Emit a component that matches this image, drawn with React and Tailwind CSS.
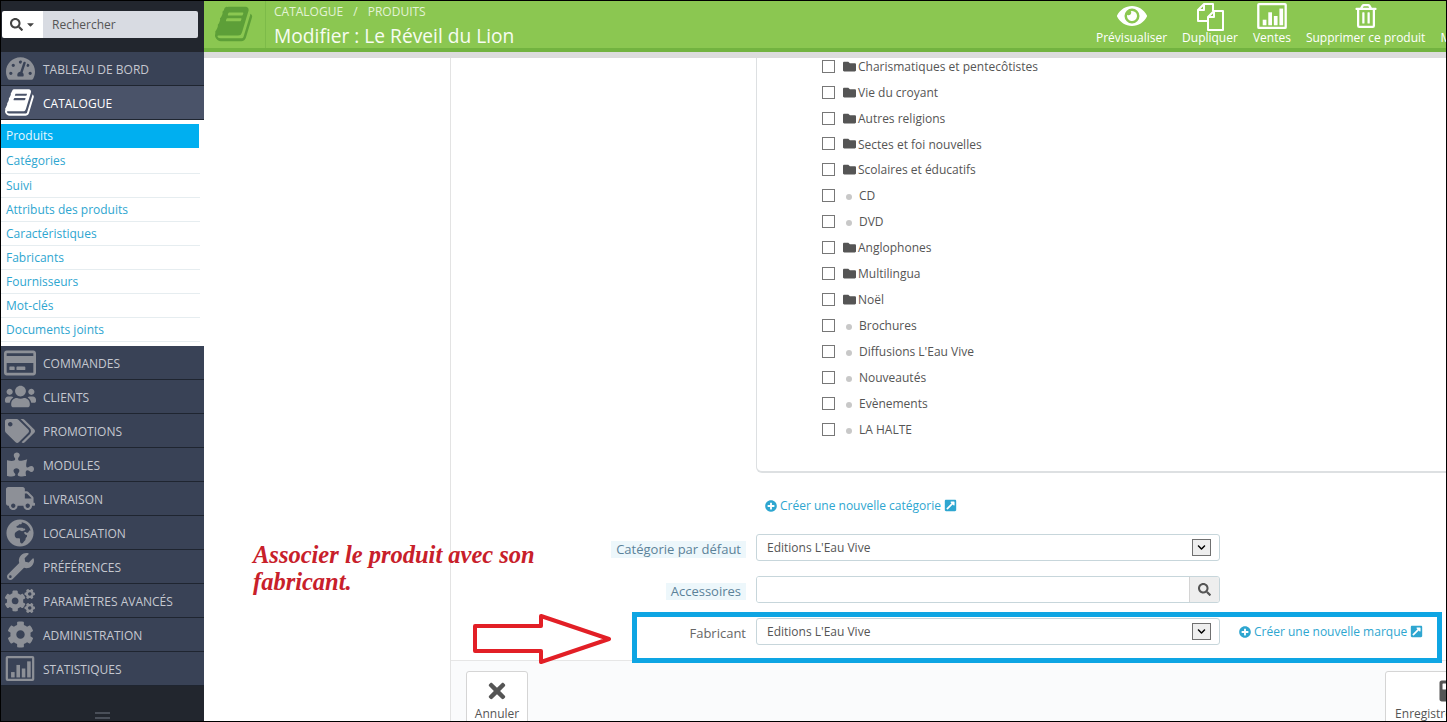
import React from 'react';
import {
  FaCaretDown, FaCog, FaCogs, FaExternalLinkSquareAlt, FaEye, FaFolder, FaGlobeAfrica,
  FaPlusCircle, FaPuzzlePiece, FaRegCreditCard, FaRegTrashAlt, FaSave, FaSearch,
  FaTachometerAlt, FaTags, FaTimes, FaTruck, FaUsers, FaWrench, FaChevronDown,
} from 'react-icons/fa';

function BookIcon({ className }) {
  return (
    <svg viewBox="0 0 1792 1792" className={className} fill="currentColor">
      <path d="M1639 478q40 57 18 129l-275 906q-19 64-76.5 107.5t-122.5 43.5h-923q-77 0-148.5-53.5t-99.5-131.5q-24-67-2-127 0-4 3-27t4-37q1-8-3-21.5t-3-19.5q2-11 8-21t16.5-23.5 16.5-23.5q23-38 45-91.5t30-91.5q3-10 .5-30t-.5-28q3-11 17-28t17-23q21-36 42-92t25-90q1-9-2.5-32t.5-28q4-13 22-30.5t22-22.5q19-26 42.5-84.5t27.5-96.5q1-8-3-25.5t-2-26.5q2-8 9-18t18-23 17-21q8-12 16.5-30.5t15-35 16-36 19.5-32 26.5-23.5 36-11.5 47.5 5.5l-1 3q38-9 51-9h761q74 0 114 56t18 130l-274 906q-36 119-71.5 153.5t-128.5 34.5h-869q-27 0-38 15-11 16-1 43 24 70 144 70h923q29 0 56-15.5t35-41.5l300-987q7-22 5-57 38 15 59 43zm-1064 2q-4 13 2 22.5t20 9.5h608q13 0 25.5-9.5t16.5-22.5l21-64q4-13-2-22.5t-20-9.5h-608q-13 0-25.5 9.5t-16.5 22.5zm-83 256q-4 13 2 22.5t20 9.5h608q13 0 25.5-9.5t16.5-22.5l21-64q4-13-2-22.5t-20-9.5h-608q-13 0-25.5 9.5t-16.5 22.5z" />
    </svg>
  );
}

function BarsIcon({ className }) {
  return (
    <svg viewBox="0 0 32 28" className={className} fill="currentColor">
      <path fillRule="evenodd" d="M2 0h28a2 2 0 0 1 2 2v24a2 2 0 0 1-2 2H2a2 2 0 0 1-2-2V2a2 2 0 0 1 2-2zm.5 2.5v23h27v-23z" />
      <rect x="6" y="18" width="4" height="6" />
      <rect x="12" y="10" width="4" height="14" />
      <rect x="18" y="14" width="4" height="10" />
      <rect x="24" y="6" width="4" height="18" />
    </svg>
  );
}

function PagesIcon({ className }) {
  return (
    <svg viewBox="0 0 28 29" className={className} fill="none" stroke="currentColor" strokeWidth="2" strokeLinejoin="round">
      <path d="M12 19H2V8l6-6h9v7" />
      <path d="M8 2v6H2" />
      <path d="M12 15l6-6h9v19H12z" />
      <path d="M18 9v6h-6" />
    </svg>
  );
}

const menuTop = [
  { label: 'TABLEAU DE BORD', Icon: FaTachometerAlt, size: 'text-[29px]' },
  { label: 'CATALOGUE', Icon: BookIcon, size: 'w-[31px] h-[31px]', active: true },
];

const menuBottom = [
  { label: 'COMMANDES', Icon: FaRegCreditCard, size: 'text-[32px]' },
  { label: 'CLIENTS', Icon: FaUsers, size: 'text-[31px]' },
  { label: 'PROMOTIONS', Icon: FaTags, size: 'text-[30px]' },
  { label: 'MODULES', Icon: FaPuzzlePiece, size: 'text-[27px]' },
  { label: 'LIVRAISON', Icon: FaTruck, size: 'text-[29px]' },
  { label: 'LOCALISATION', Icon: FaGlobeAfrica, size: 'text-[28px]' },
  { label: 'PRÉFÉRENCES', Icon: FaWrench, size: 'text-[27px]' },
  { label: 'PARAMÈTRES AVANCÉS', Icon: FaCogs, size: 'text-[30px]' },
  { label: 'ADMINISTRATION', Icon: FaCog, size: 'text-[27px]' },
  { label: 'STATISTIQUES', Icon: BarsIcon, size: 'w-[30px] h-[25px]' },
];

const subMenu = ['Catégories', 'Suivi', 'Attributs des produits', 'Caractéristiques', 'Fabricants', 'Fournisseurs', 'Mot-clés', 'Documents joints'];

const tree = [
  ['Charismatiques et pentecôtistes', true],
  ['Vie du croyant', true],
  ['Autres religions', true],
  ['Sectes et foi nouvelles', true],
  ['Scolaires et éducatifs', true],
  ['CD', false],
  ['DVD', false],
  ['Anglophones', true],
  ['Multilingua', true],
  ['Noël', true],
  ['Brochures', false],
  ['Diffusions L\'Eau Vive', false],
  ['Nouveautés', false],
  ['Evènements', false],
  ['LA HALTE', false],
];

function MenuItem({ item }) {
  const { label, Icon, size, active } = item;
  return (
    <div className={`h-[34px] pt-[2px] flex items-center border-b border-[#1f2530] ${active ? 'bg-[#4a5369] text-white' : 'bg-[#394256] text-[#c5c8d0]'}`}>
      <div className={`w-[38px] mr-[4px] -mt-[2px] shrink-0 flex justify-center ${active ? 'text-white' : 'text-[#8d9097]'}`}>
        <Icon className={size} />
      </div>
      <span className="text-[12px]">{label}</span>
    </div>
  );
}

function FakeSelect({ value }) {
  return (
    <div className="w-[464px] h-[27px] shrink-0 bg-white border border-[#c7d6db] rounded-[3px] flex items-center justify-between pl-[10px] pr-[8px] text-[12px] text-[#555]">
      <span className="pt-[1px]">{value}</span>
      <span className="w-[19px] h-[17px] bg-[#eeeeee] border border-[#707070] flex items-center justify-center text-black">
        <FaChevronDown className="text-[9px]" />
      </span>
    </div>
  );
}

function Label({ children, badge }) {
  return (
    <div className="w-[305px] shrink-0 flex justify-end pr-[10px] pt-[3px]">
      {badge ? (
        <span className="text-[13px] leading-[17px] px-[5px] bg-[#edf7fb] text-[#5b8299]">{children}</span>
      ) : (
        <span className="text-[13px] leading-[17px] text-[#666]">{children}</span>
      )}
    </div>
  );
}

function ToolbarAction({ label, children }) {
  return (
    <div className="flex flex-col items-center shrink-0">
      <div className="h-[30px] flex items-center justify-center text-white">{children}</div>
      <span className="text-[12px] leading-[14px] text-white whitespace-nowrap">{label}</span>
    </div>
  );
}

export default function App() {
  return (
    <div className="relative w-[1447px] h-[722px] overflow-hidden border border-black bg-white flex font-['Open_Sans',sans-serif]">
      <aside className="w-[203px] shrink-0 bg-[#22262e] flex flex-col">
        <div className="h-[51px] pt-[10px] px-[1px] shrink-0">
          <div className="flex h-[27px] w-[196px] rounded-[2px] overflow-hidden">
            <div className="w-[41px] bg-white flex items-center justify-center gap-[2px] text-[#444]">
              <FaSearch className="text-[13px]" />
              <FaCaretDown className="text-[11px]" />
            </div>
            <div className="flex-1 bg-[#d8dbe2] pl-[9px] flex items-center text-[12px] text-[#555]">Rechercher</div>
          </div>
        </div>
        {menuTop.map((m) => <MenuItem key={m.label} item={m} />)}
        <div className="h-[226px] shrink-0 bg-white pt-[4px] pr-[4px]">
          <div className="h-[24px] bg-[#00aff0] text-[#e8f8ff] text-[12px] pl-[5px] mr-[1px] flex items-center">Produits</div>
          {subMenu.map((s, i) => (
            <div key={s} className={`${i === 0 ? 'h-[26px]' : 'h-[24px]'} border-b border-[#e6edf0] text-[12px] text-[#2ea6d0] pl-[5px] flex items-center`}>{s}</div>
          ))}
        </div>
        {menuBottom.map((m) => <MenuItem key={m.label} item={m} />)}
        <div className="flex-1 flex items-end justify-center pb-[1px]">
          <div className="w-[15px] h-[7px] border-y-2 border-[#4a4f59] mb-[1px]" />
        </div>
      </aside>

      <main className="flex-1 min-w-0 flex flex-col">
        <header className="h-[51px] shrink-0 bg-[#8bc751] border-b-[4px] border-[#72b340] flex overflow-hidden">
          <div className="w-[62px] shrink-0 flex justify-center pt-[3px] border-r border-[#7dbb49]">
            <BookIcon className="w-[40px] h-[40px] text-[#5d9f38]" />
          </div>
          <div className="w-[830px] shrink-0 pl-[8px] pt-[3px]">
            <div className="text-[12px] leading-[16px] text-[#e4f3d6]">CATALOGUE <span className="mx-[7px]">/</span> PRODUITS</div>
            <div className="text-[19.2px] leading-[28px] text-[#f7fcf2] mt-[2px] whitespace-nowrap">Modifier : Le Réveil du Lion</div>
          </div>
          <div className="flex gap-[15px] shrink-0">
            <ToolbarAction label="Prévisualiser"><FaEye className="text-[30px]" /></ToolbarAction>
            <ToolbarAction label="Dupliquer"><PagesIcon className="w-[28px] h-[29px]" /></ToolbarAction>
            <ToolbarAction label="Ventes"><BarsIcon className="w-[32px] h-[26px]" /></ToolbarAction>
            <ToolbarAction label="Supprimer ce produit"><FaRegTrashAlt className="text-[24px]" /></ToolbarAction>
            <ToolbarAction label="M"><span className="w-[10px]" /></ToolbarAction>
          </div>
        </header>

        <div className="h-[6px] shrink-0 bg-[#dcdcdc]" />

        <div className="flex-1 min-h-0 flex">
          <div className="w-[247px] shrink-0 border-r border-[#e3e3e3]" />

          <div className="flex-1 min-w-0 flex flex-col">
            <div className="flex-1 min-h-0 overflow-hidden">
              <div className="ml-[305px] w-[800px] h-[415px] border-l border-b-2 border-[#dde0e2] rounded-bl-[6px] pl-[65px] overflow-hidden">
                <div className="-mt-[4px]">
                  {tree.map(([label, folder], i) => (
                    <div key={label} className={`${i === 3 ? 'h-[25px]' : 'h-[26px]'} flex items-center text-[12px] text-[#555]`}>
                      <span className="w-[13px] h-[13px] border border-[#777] bg-white shrink-0 -translate-y-[1px]" />
                      {folder ? (
                        <FaFolder className="text-[#555] text-[13px] ml-[8px] mr-[2px] -translate-y-[1px]" />
                      ) : (
                        <span className="w-[6px] h-[6px] rounded-full bg-[#c8c8c8] ml-[11px] mr-[7px] translate-y-[1px]" />
                      )}
                      <span>{label}</span>
                    </div>
                  ))}
                </div>
              </div>

              <div className="h-[61px] pl-[314px] pt-[25px] flex items-start gap-[3px] text-[12px] leading-[16px] text-[#2ea6d0]">
                <FaPlusCircle className="text-[12px] mt-[2px]" />
                <span>Créer une nouvelle catégorie</span>
                <FaExternalLinkSquareAlt className="text-[13px] mt-[1px]" />
              </div>

              <div className="flex items-center h-[27px]">
                <Label badge>Catégorie par défaut</Label>
                <FakeSelect value="Editions L'Eau Vive" />
              </div>

              <div className="flex items-center h-[27px] mt-[15px]">
                <Label badge>Accessoires</Label>
                <div className="w-[464px] h-[27px] flex border border-[#c7d6db] rounded-[3px] overflow-hidden">
                  <div className="flex-1 bg-white" />
                  <div className="w-[30px] bg-[#eeeeee] border-l border-[#d4d4d4] flex items-center justify-center text-[#555]">
                    <FaSearch className="text-[13px]" />
                  </div>
                </div>
              </div>

              <div className="flex items-center h-[27px] mt-[15px]">
                <Label>Fabricant</Label>
                <FakeSelect value="Editions L'Eau Vive" />
                <div className="ml-[19px] flex items-center gap-[3px] text-[12px] text-[#2ea6d0] whitespace-nowrap">
                  <FaPlusCircle className="text-[12px]" />
                  <span>Créer une nouvelle marque</span>
                  <FaExternalLinkSquareAlt className="text-[13px]" />
                </div>
              </div>
            </div>

            <footer className="h-[61px] shrink-0 bg-[#fafbfc] border-t border-[#e6e6e6] flex justify-between pl-[15px] pt-[10px]">
              <div className="w-[62px] h-[60px] bg-white border border-[#d5d5d5] rounded-t-[3px] flex flex-col items-center pt-[7px] text-[#555]">
                <FaTimes className="text-[24px]" />
                <span className="text-[12px] leading-[14px] mt-[4px]">Annuler</span>
              </div>
              <div className="w-[82px] h-[60px] -mr-[21px] bg-white border border-[#d5d5d5] rounded-t-[3px] flex flex-col items-center pt-[7px] text-[#555]">
                <FaSave className="text-[24px] translate-x-[24px]" />
                <span className="text-[12px] leading-[14px] mt-[4px]">Enregistrer</span>
              </div>
            </footer>
          </div>
        </div>
      </main>

      {/* annotations drawn over the screenshot */}
      <div className="absolute left-[252px] top-[540px] text-[#c8202a] text-[24.5px] leading-[27px] font-bold italic font-['Liberation_Serif',serif]">
        Associer le produit avec son<br />fabricant.
      </div>
      <svg className="absolute left-[471px] top-[612px]" width="142" height="52" viewBox="0 0 142 52">
        <path d="M3 13H69V3L137 26L69 49V38H3Z" fill="none" stroke="#e21f26" strokeWidth="4" strokeLinejoin="round" />
      </svg>
      <div className="absolute left-[631px] top-[611px] w-[810px] h-[51px] border-[5px] border-[#0ea5e3]" />
    </div>
  );
}
